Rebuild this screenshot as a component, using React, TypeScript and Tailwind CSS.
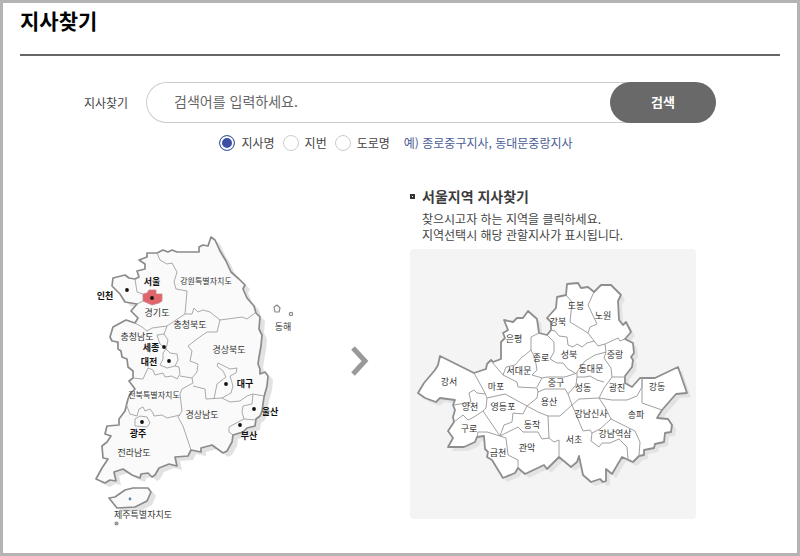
import { useState } from "react";

type Label = { name: string; x: number; y: number; size?: number; bold?: boolean };

const KOREA_OUTLINE =
  "M147 254 L157 254 L163 251 L168 253 L172 251 L177 253 L199 253 L199 248 L203 246 L208 247 L211 238 L215 241 L220 252 L226 262 L231 273 L239 280 L245 286 L243 290 L247 299 L254 307 L256 314 L260 318 L259 330 L262 336 L261 347 L259 358 L258 365 L260 370 L260 375 L265 373 L268 377 L267 387 L264 398 L262 412 L260 417 L256 420 L255 427 L247 429 L243 433 L233 436 L232 443 L227 452 L223 454 L212 446 L201 449 L201 453 L191 451 L188 457 L175 458 L177 467 L169 465 L159 469 L155 476 L152 478 L148 474 L141 475 L140 479 L132 476 L123 470 L114 473 L116 482 L110 481 L105 484 L96 480 L102 469 L108 460 L103 459 L102 447 L107 443 L111 437 L105 435 L107 427 L119 426 L119 420 L125 412 L128 400 L130 395 L135 390 L129 382 L133 379 L133 372 L128 368 L127 360 L122 358 L121 352 L118 350 L118 343 L112 342 L110 338 L113 328 L126 321 L135 324 L138 319 L131 312 L137 305 L125 303 L120 295 L112 287 L113 279 L125 276 L129 279 L135 280 L139 278 L137 272 L145 270 L145 265 L139 261 L147 258 Z";

const KOREA_BORDERS = [
  "M157 254 L160 261 L167 265 L172 264 L177 273 L174 283 L176 290 L187 292 L185 315",
  "M185 315 L192 315 L194 309 L198 313 L203 311 L210 313 L220 321 L242 318 L247 320 L255 314",
  "M135 324 L142 328 L147 332 L152 329 L167 327 L185 315",
  "M135 280 L137 293 L143 295 M143 302 L137 305",
  "M167 327 L164 335 L157 336 L160 345 L166 350 L168 341 L164 335",
  "M166 350 L163 354 L163 360 L160 366 L167 369 L175 367 L178 361 L177 355 L170 354 L166 350",
  "M220 321 L217 333 L207 333 L197 340 L188 347 L192 352 L190 362 L198 365 L197 373 L192 379 L180 377",
  "M133 379 L143 380 L148 369 L153 371 L155 376 L163 374 L165 378 L172 377 L177 380 L180 375 L179 368 L175 367",
  "M192 379 L193 384 L182 390 L180 395 L182 412 L178 418 L183 427 L191 451",
  "M126 405 L130 415 L137 417 L139 410 L143 408 L145 412 L150 410 L153 414 L154 417 L162 416 L167 419 L180 416",
  "M193 387 L205 390 L206 400 L222 399 L230 403 L240 402 L247 397 L253 395 L264 397",
  "M214 400 L217 385 L226 378 L223 372 L217 367 L218 364 L230 370 L237 369 L236 374 L230 377 L233 387 L231 394 L222 399",
  "M253 395 L252 405 L243 407 L242 413 L244 420 L256 421",
  "M244 420 L240 422 L229 428 L229 433 L233 436",
  "M135 427 L135 420 L140 417 L147 418 L150 424 L147 428 Z",
];

const KOREA_LABELS: Label[] = [
  { name: "강원특별자치도", x: 206, y: 285, size: 8 },
  { name: "경기도", x: 157, y: 317 },
  { name: "충청북도", x: 190, y: 329 },
  { name: "충청남도", x: 137, y: 341 },
  { name: "경상북도", x: 229, y: 354 },
  { name: "전북특별자치도", x: 154, y: 399, size: 8 },
  { name: "경상남도", x: 202, y: 419 },
  { name: "전라남도", x: 134, y: 457 },
  { name: "제주특별자치도", x: 143, y: 519 },
  { name: "동해", x: 283, y: 331 },
  { name: "서울", x: 152, y: 286, bold: true },
  { name: "인천", x: 105, y: 300, bold: true },
  { name: "세종", x: 151, y: 352, bold: true },
  { name: "대전", x: 149, y: 366, bold: true },
  { name: "대구", x: 245, y: 388, bold: true },
  { name: "울산", x: 270, y: 416, bold: true },
  { name: "부산", x: 249, y: 440, bold: true },
  { name: "광주", x: 138, y: 438, bold: true },
];

const CITY_DOTS = [
  [127, 291],
  [152, 299],
  [164, 348],
  [169, 362],
  [226, 385],
  [254, 410],
  [240, 426],
  [142, 423],
];

const SEOUL_OUTLINE =
  "M440 356 L474 373 L486 369 L487 364 L491 360 L493 362 L501 359 L501 342 L505 338 L503 333 L508 330 L504 320 L513 322 L517 318 L523 318 L528 311 L537 319 L539 333 L547 335 L551 330 L551 322 L547 318 L556 308 L557 297 L566 295 L567 284 L578 283 L581 288 L588 287 L594 292 L601 285 L611 285 L621 295 L618 301 L619 320 L623 325 L626 322 L631 332 L625 339 L633 343 L634 353 L631 357 L633 360 L632 367 L625 376 L625 383 L632 387 L640 378 L655 378 L678 367 L687 393 L676 394 L662 410 L657 418 L668 419 L672 425 L671 432 L665 433 L664 442 L655 444 L654 448 L644 450 L644 455 L639 456 L633 462 L622 457 L612 474 L606 469 L606 481 L603 482 L600 479 L591 482 L583 475 L579 456 L577 462 L571 467 L559 457 L547 469 L544 465 L525 474 L518 468 L515 473 L503 478 L492 460 L487 457 L488 452 L485 449 L484 436 L477 437 L475 442 L464 447 L448 447 L453 438 L448 431 L454 422 L453 417 L455 410 L453 405 L455 400 L440 398 L436 402 L425 398 L418 393 L424 383 L435 370 L438 365 Z";

const SEOUL_BORDERS = [
  "M539 333 L531 337 L531 350 L525 355 L522 357 L515 365 L506 367 L503 375 L492 362",
  "M547 335 L554 342 L554 352 L550 359 L557 363 L563 363 L568 369 L575 373",
  "M551 330 L555 331 L559 336 L567 337 L568 345 L573 347 L577 344 L582 347 L587 343 L594 341",
  "M566 295 L572 302 L570 322 L588 333 L598 346 L605 344",
  "M594 292 L588 305 L597 324 L590 327 L588 333",
  "M605 344 L618 338 L620 341 L625 339",
  "M605 344 L606 352 L604 358 L611 368 L612 377 L626 377",
  "M606 352 L595 355 L585 361 L577 372 L577 377 L585 377 L590 376 L597 380 L604 382",
  "M612 377 L604 388 L599 398 L612 400 L627 400 L637 396 L642 387 L642 378",
  "M642 378 L642 403 L662 410",
  "M577 377 L576 385 L568 394 L572 405 L579 399 L599 398",
  "M537 387 L542 378 L547 377 L565 377 L577 373",
  "M538 392 L545 389 L565 389 L568 394",
  "M503 375 L517 382 L518 387 L537 388 L538 392 L537 398 L527 406 L538 412 L548 416 L560 416 L572 405",
  "M531 350 L535 358 L537 370 L532 375 L542 378",
  "M474 373 L485 393 L487 398 L505 394 L527 406",
  "M454 405 L471 402 L469 393 L474 390 L477 393 L485 394",
  "M487 398 L486 408 L483 411 L500 436",
  "M454 422 L463 415 L468 420 L474 417 L483 411",
  "M477 437 L478 432 L487 432 L500 436 L506 438 L508 455 L518 460 L518 468",
  "M527 406 L523 414 L513 413 L512 422 L504 425 L500 436",
  "M500 436 L518 427 L523 432 L538 432 L542 439 L549 438",
  "M548 416 L549 438 L554 442 L559 440 L559 457",
  "M572 405 L583 431 L590 430 L592 433 L591 441 L599 447 L602 443 L610 443 L619 439 L627 447 L628 459",
  "M592 433 L600 429 L611 419",
  "M599 398 L605 407 L611 419 L635 431 L640 442 L639 456",
];

const SEOUL_LABELS: Label[] = [
  { name: "도봉", x: 576, y: 309 },
  { name: "노원", x: 603, y: 319 },
  { name: "강북", x: 558, y: 325 },
  { name: "은평", x: 514, y: 342 },
  { name: "종로", x: 541, y: 361 },
  { name: "성북", x: 569, y: 358 },
  { name: "중랑", x: 615, y: 358 },
  { name: "서대문", x: 519, y: 374 },
  { name: "동대문", x: 591, y: 372 },
  { name: "강서", x: 449, y: 385 },
  { name: "마포", x: 496, y: 390 },
  { name: "중구", x: 556, y: 386 },
  { name: "성동", x: 583, y: 391 },
  { name: "광진", x: 617, y: 391 },
  { name: "강동", x: 657, y: 390 },
  { name: "양천", x: 470, y: 410 },
  { name: "영등포", x: 503, y: 410 },
  { name: "용산", x: 549, y: 405 },
  { name: "강남신사", x: 591, y: 417 },
  { name: "송파", x: 636, y: 418 },
  { name: "구로", x: 469, y: 432 },
  { name: "동작", x: 532, y: 428 },
  { name: "금천", x: 498, y: 456 },
  { name: "관악", x: 527, y: 451 },
  { name: "서초", x: 574, y: 443 },
  { name: "강남역삼", x: 615, y: 437 },
];

function MapLabels({ labels }: { labels: Label[] }) {
  return (
    <g textAnchor="middle">
      {labels.map((l) => (
        <text
          key={l.name}
          x={l.x}
          y={l.y}
          fontSize={l.size ?? 9}
          fontWeight={l.bold ? 700 : 400}
          fill={l.bold ? "#111" : "#333"}
        >
          {l.name}
        </text>
      ))}
    </g>
  );
}

function KoreaMap() {
  const jeju = "M109 499 L115 498 L125 491 L133 489 L148 489 L151 493 L147 502 L135 508 L117 509 Z";
  return (
    <svg viewBox="90 230 220 300" className="mt-[41px] w-[220px] shrink-0" role="img" aria-label="전국 지도">
      <g fill="#e2e2e2" transform="translate(5 4)">
        <path d={KOREA_OUTLINE} />
        <path d={jeju} />
      </g>
      <g fill="#fafafa" stroke="#8b8b8b" strokeWidth="1.7" strokeLinejoin="round">
        <path d={KOREA_OUTLINE} />
        <path d={jeju} />
        <path d="M274 308 L277 306 L280 309 L279 313 L275 313 Z" strokeWidth="1.2" />
        <circle cx="291" cy="315" r="1.7" strokeWidth="1.2" />
        <circle cx="116.5" cy="524.5" r="1.5" fill="#aaa" strokeWidth="1.2" />
      </g>
      <g fill="none" stroke="#a0a0a0" strokeWidth="0.9" strokeLinejoin="round">
        {KOREA_BORDERS.map((d) => (
          <path key={d} d={d} />
        ))}
      </g>
      <path
        d="M143 295 L147 294 L149 291 L156 291 L156 295 L162 295 L162 302 L159 304 L152 306 L143 302 Z"
        fill="#e0656b"
        stroke="#c9868a"
        strokeWidth="0.8"
      />
      {CITY_DOTS.map(([x, y]) => (
        <circle key={`${x}-${y}`} cx={x} cy={y} r="1.9" fill="#111" />
      ))}
      <circle cx="130" cy="500" r="1.4" fill="#5f86a8" />
      <MapLabels labels={KOREA_LABELS} />
    </svg>
  );
}

function SeoulMap() {
  return (
    <svg viewBox="410 249 286 270" className="block w-full" role="img" aria-label="서울 지도">
      <path d={SEOUL_OUTLINE} fill="#e3e3e3" transform="translate(4 4)" />
      <path d={SEOUL_OUTLINE} fill="#fff" stroke="#8e8e8e" strokeWidth="1.8" strokeLinejoin="round" />
      <g fill="none" stroke="#a0a0a0" strokeWidth="1" strokeLinejoin="round">
        {SEOUL_BORDERS.map((d) => (
          <path key={d} d={d} />
        ))}
      </g>
      <MapLabels labels={SEOUL_LABELS} />
    </svg>
  );
}

const MODES = ["지사명", "지번", "도로명"];

export default function App() {
  const [mode, setMode] = useState(MODES[0]);
  return (
    <main
      lang="ko"
      className="min-h-screen border-[3px] border-[#b4b4b4] bg-white px-[17px] font-['Noto_Sans_CJK_KR',sans-serif] text-[#444]"
    >
      <h1 className="border-b-2 border-[#666] pt-[3px] pb-5 text-[21px] leading-7 font-bold text-black">지사찾기</h1>

      <form className="pt-[26px]" onSubmit={(e) => e.preventDefault()}>
        <div className="flex items-center justify-center gap-[18px]">
          <label htmlFor="branch" className="shrink-0 text-xs">
            지사찾기
          </label>
          <div className="flex w-full max-w-[570px]">
            <input
              id="branch"
              type="text"
              placeholder="검색어를 입력하세요."
              className="h-[41px] min-w-0 flex-1 rounded-l-full border border-r-0 border-[#ccc] pb-1 pl-[27px] text-sm outline-none placeholder:text-[#666]"
            />
            <button
              type="submit"
              className="-ml-5 h-[41px] w-[106px] rounded-full bg-[#696969] pb-px text-[13px] font-bold text-white"
            >
              검색
            </button>
          </div>
        </div>
        <div className="mt-3 flex items-center justify-center pr-2 text-xs leading-4">
          <div role="radiogroup" aria-label="검색 기준" className="flex items-center gap-2">
            {MODES.map((m) => (
              <label key={m} className="flex items-center gap-[6px]">
                <input
                  type="radio"
                  name="mode"
                  checked={mode === m}
                  onChange={() => setMode(m)}
                  className="size-4 appearance-none rounded-full border border-[#ccc] bg-white checked:border-[#4a64a0] checked:bg-[#3b4fa5] checked:shadow-[inset_0_0_0_2px_white]"
                />
                {m}
              </label>
            ))}
          </div>
          <p className="ml-[14px] text-[#4b5d96]">예) 종로중구지사, 동대문중랑지사</p>
        </div>
      </form>

      <div className="mt-[37px] flex justify-center gap-10 pr-[14px]">
        <KoreaMap />
        <svg viewBox="0 0 20 30" className="mt-[158px] h-[30px] w-5 shrink-0" aria-hidden="true">
          <path d="M3 2 L15 15 L3 28" fill="none" stroke="#999" strokeWidth="5" />
        </svg>
        <section className="w-[286px] shrink-0">
          <h2 className="flex items-center gap-[7px] text-sm leading-4 font-bold text-[#3c3c3c]">
            <span className="size-[5px] border-2 border-[#333]" />
            서울지역 지사찾기
          </h2>
          <p className="mt-[7px] pl-3 text-xs leading-4">
            찾으시고자 하는 지역을 클릭하세요.
            <br />
            지역선택시 해당 관할지사가 표시됩니다.
          </p>
          <div className="mt-[6px] overflow-hidden rounded bg-[#f4f4f4]">
            <SeoulMap />
          </div>
        </section>
      </div>
    </main>
  );
}
